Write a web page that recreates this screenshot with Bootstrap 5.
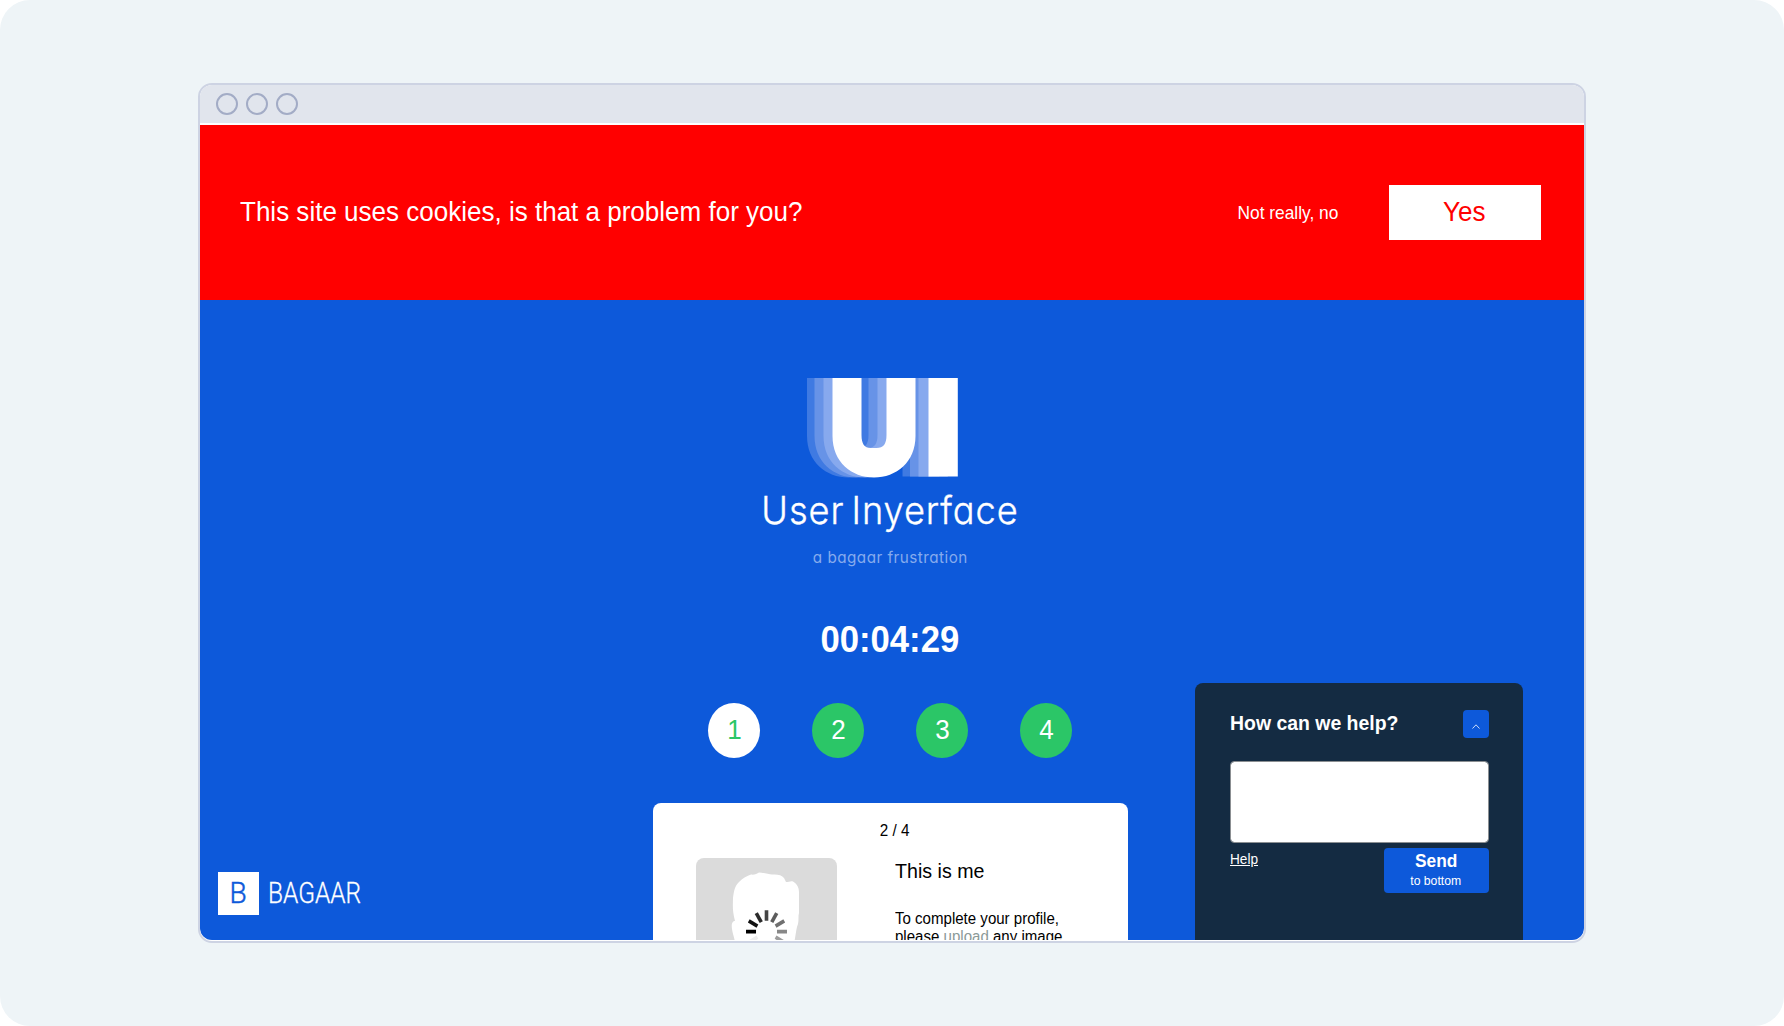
<!DOCTYPE html>
<html lang="en">
<head>
<meta charset="utf-8">
<meta name="viewport" content="width=device-width, initial-scale=1">
<title>User Inyerface</title>
<link rel="stylesheet" href="https://cdn.jsdelivr.net/npm/bootstrap@5.3.0/dist/css/bootstrap.min.css">
<style>
:root { --brand: #0d59da; --navy: #142b42; --go: #2bc667; }
html, body { height: 100%; }
body { margin: 0; background: #fff; overflow: hidden; font-family: "Liberation Sans", Arial, sans-serif; color: #000; }
.backdrop { height: 1026px; background: #eef4f7; border-radius: 30px; padding: 83px 198px; }
.browser { height: 860px; border: 2px solid #cdd3e3; border-radius: 14px; background: #fff; overflow: hidden; }
.browser-bar { height: 38px; background: #e1e5ed; padding-left: 16px; gap: 8px; margin-bottom: 2px; }
.dot { width: 22px; height: 22px; border: 2px solid #a3acc6; }
.site { height: 815px; background: var(--brand); border-radius: 0 0 12px 12px; overflow: hidden; }
.squeeze { display: inline-block; white-space: nowrap; transform: scaleX(.953); transform-origin: center; }
.squeeze-start { transform-origin: left center; }
.cookies { height: 175.4px; background: red; padding: 0 43.5px 0 40px; }
.cookies-text { font-size: 27.3px; margin-top: 0; }
.cookies-no { font-size: 18.2px; margin-right: 47.5px; margin-top: 1px; }
.cookies-yes { width: 152px; height: 55px; background: #fff; color: red; font-size: 27.3px; margin-top: -1px; padding: 1px 0 0; border-radius: 0; }
.stage { padding: 78px 3.5px 0 0; }
.ui-logo { width: 166px; height: 100px; }
.brand-name { font: 300 38px/50px Inter, sans-serif; font-feature-settings: "cv11"; letter-spacing: .95px; word-spacing: -4px; margin-top: 7px; color: #fff; -webkit-text-stroke: .35px #fff; }
.brand-sub { font: 400 16px/24px Inter, sans-serif; font-feature-settings: "cv11"; letter-spacing: .5px; margin-top: 9.5px; color: #86abed; }
.timer { font-size: 36.4px; line-height: 44px; font-weight: 700; margin-top: 49.5px; }
.steps { margin-top: 40.5px; gap: 52px; }
.step { width: 52px; height: 55px; border-radius: 50%; background: var(--go); color: #fff; font-size: 27.3px; }
.step.now { background: #fff; color: var(--go); }
.profile { width: 475px; height: 240px; margin-top: 45px; border-radius: 8px; background: #fff; padding: 18px 43px 0; }
.page-no { font-size: 16px; line-height: 20px; padding-left: 9px; }
.avatar-row { margin-top: 17px; }
.avatar { width: 141px; height: 142px; border-radius: 8px; margin-right: 58px; display: block; }
.me-title { font-size: 20.6px; line-height: 25px; }
.me-text { font-size: 15.8px; line-height: 18px; margin-top: 27px; }
.me-text a { color: #8b9998; text-decoration: none; }
.helper { position: absolute; left: 995px; bottom: 0; width: 328px; height: 257px; background: var(--navy); border-radius: 8px 8px 0 0; padding: 27px 34.5px 0; }
.helper-head { height: 27.5px; }
.helper-title { font-size: 20.4px; line-height: 24px; font-weight: 700; margin-top: .5px; }
.helper-up { width: 26px; height: 27.5px; border-radius: 4px; background: var(--brand); padding: 0; }
.helper-up svg { margin-top: 13.5px; }
.helper-box { height: 82px; min-height: 0; margin-top: 23.5px; border: 1px solid #8b8f92; border-radius: 4px; resize: none; padding: 0; }
.helper-link { font-size: 14.3px; line-height: 16px; margin-top: 7.5px; }
.helper-send { width: 105px; height: 45.5px; margin-top: 4.5px; border-radius: 4px; background: var(--brand); padding: 3px 0 0; color: #fff; }
.send-main { font-size: 18.2px; line-height: 20px; font-weight: 700; }
.send-small { font-size: 12.8px; line-height: 20px; }
.maker { position: absolute; left: 18px; bottom: 25px; gap: 9px; font: 300 29.5px/43px Roboto, sans-serif; color: #fff; }
.maker-mark { width: 41px; height: 43.5px; background: #fff; color: var(--brand); -webkit-text-stroke: .5px var(--brand); }
.maker-name { transform: scaleX(.83); transform-origin: left center; -webkit-text-stroke: .3px #fff; }
</style>
</head>
<body>
<div class="backdrop">
  <div class="browser">
    <div class="browser-bar d-flex align-items-center">
      <span class="dot rounded-circle"></span><span class="dot rounded-circle"></span><span class="dot rounded-circle"></span>
    </div>
    <div class="site position-relative">
      <header class="cookies d-flex align-items-center text-white">
        <span class="cookies-text squeeze squeeze-start me-auto">This site uses cookies, is that a problem for you?</span>
        <span class="cookies-no squeeze">Not really, no</span>
        <button class="cookies-yes btn border-0"><span class="squeeze">Yes</span></button>
      </header>

      <main class="stage d-flex flex-column align-items-center text-white">
        <svg class="ui-logo" viewBox="0 0 166 100" aria-label="UI">
          <defs>
            <path id="u-shape" d="M0 0H29V57C29 66 32 70 38 70H44C51 70 54 66 54 57V0H83V58C83 84 64 99.500 41.500 99.500S0 84 0 58Z"/>
            <path id="i-shape" d="M0 0H29.300V98.500H0Z"/>
          </defs>
          <g fill="#3f7ae2"><use href="#u-shape" x="0"/><use href="#i-shape" x="95.500"/></g>
          <g fill="#6793e7"><use href="#u-shape" x="7.500"/><use href="#i-shape" x="103"/></g>
          <g fill="#87a9ee"><use href="#u-shape" x="16.500"/><use href="#i-shape" x="111.500"/></g>
          <g fill="#fff"><use href="#u-shape" x="25.500"/><use href="#i-shape" x="121.500"/></g>
        </svg>
        <div class="brand-name"><span class="squeeze">User Inyerface</span></div>
        <div class="brand-sub"><span class="squeeze">a bagaar frustration</span></div>
        <div class="timer"><span class="squeeze">00:04:29</span></div>
        <div class="steps d-flex">
          <span class="step now d-flex align-items-center justify-content-center"><span class="squeeze">1</span></span>
          <span class="step d-flex align-items-center justify-content-center"><span class="squeeze">2</span></span>
          <span class="step d-flex align-items-center justify-content-center"><span class="squeeze">3</span></span>
          <span class="step d-flex align-items-center justify-content-center"><span class="squeeze">4</span></span>
        </div>
        <section class="profile text-black">
          <div class="page-no text-center"><span class="squeeze">2 / 4</span></div>
          <div class="avatar-row d-flex">
            <svg class="avatar flex-shrink-0" viewBox="0 0 141 142">
              <rect width="141" height="142" fill="#dbdbdb"/>
              <path fill="#fff" d="M39 90C40 83 37 78 36 71C35 65 37 63 39 63C36 52 37 46 37 40C38 32 39 28 43 24C47 20 51 18 55 16.500C58 17 61 16 63 14.500C69 15 73 16.500 76 16.500C81 16 86 17 88 20L90 24C93 24 95 22.500 97 23.500C101 26 103 29 103 35V55C102 58 103 61 102 66C100 70 100 78 97 90V142H39Z"/>
              <g stroke-width="3.800" stroke-linecap="butt" transform="translate(70.500 73.700) scale(.953 1)">
                <path stroke="#000" d="M-11-0H-21.500"/>
                <path stroke="#111" d="M-11 0H-21.500" transform="rotate(30)"/>
                <path stroke="#2b2b2b" d="M-11 0H-21.500" transform="rotate(60)"/>
                <path stroke="#444" d="M-11 0H-21.500" transform="rotate(90)"/>
                <path stroke="#5c5c5c" d="M-11 0H-21.500" transform="rotate(120)"/>
                <path stroke="#707070" d="M-11 0H-21.500" transform="rotate(150)"/>
                <path stroke="#888" d="M-11 0H-21.500" transform="rotate(180)"/>
                <path stroke="#9d9d9d" d="M-11 0H-21.500" transform="rotate(210)"/>
                <path stroke="#eee" d="M-11 0H-21.500" transform="rotate(330)"/>
              </g>
            </svg>
            <div>
              <div class="me-title"><span class="squeeze squeeze-start">This is me</span></div>
              <div class="me-text"><span class="squeeze squeeze-start">To complete your profile,<br>please <a href="#">upload</a> any image.</span></div>
            </div>
          </div>
        </section>
      </main>

      <aside class="helper text-white">
        <div class="helper-head d-flex justify-content-between align-items-start">
          <span class="helper-title squeeze squeeze-start">How can we help?</span>
          <button class="helper-up btn border-0 d-flex justify-content-center align-items-start" aria-label="Expand">
            <svg width="8" height="5" viewBox="0 0 8 5" fill="none" stroke="#fff" stroke-width=".8"><path d="M.5 4.500 4 .8 7.500 4.500"/></svg>
          </button>
        </div>
        <textarea class="helper-box form-control" aria-label="Message"></textarea>
        <div class="d-flex justify-content-between align-items-start">
          <a href="#" class="helper-link squeeze squeeze-start text-white">Help</a>
          <button class="helper-send btn border-0 d-flex flex-column align-items-center">
            <span class="send-main squeeze">Send</span>
            <span class="send-small squeeze">to bottom</span>
          </button>
        </div>
      </aside>

      <div class="maker d-flex align-items-center">
        <span class="maker-mark d-flex align-items-center justify-content-center"><span class="squeeze">B</span></span>
        <span class="maker-name">BAGAAR</span>
      </div>
    </div>
  </div>
</div>
<script src="https://cdn.jsdelivr.net/npm/bootstrap@5.3.0/dist/js/bootstrap.bundle.min.js"></script>
</body>
</html>
